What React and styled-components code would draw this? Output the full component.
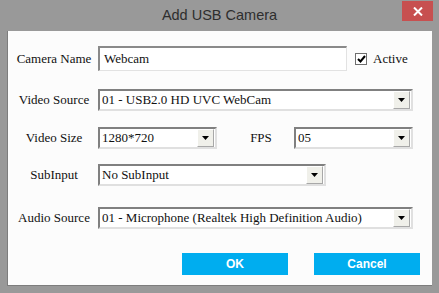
import React from 'react';
import styled, { createGlobalStyle } from 'styled-components';

const GlobalStyle = createGlobalStyle`
  html, body {
    margin: 0;
    padding: 0;
    background: #999999;
  }
`;

const Window = styled.div`
  width: 439px;
  height: 293px;
  background: #999999;
  display: flex;
  flex-direction: column;
  position: relative;
`;

const TitleBar = styled.div`
  height: 31px;
  display: flex;
  align-items: center;
  justify-content: center;
  font-family: "Liberation Sans", Arial, sans-serif;
  font-size: 14.5px;
  color: #2e2e2e;
  padding-bottom: 1px;
  box-sizing: border-box;
`;

const CloseButton = styled.div`
  position: absolute;
  top: 1px;
  right: 6px;
  width: 31px;
  height: 20px;
  background: #c75050;
  display: flex;
  align-items: center;
  justify-content: center;
`;

const Panel = styled.div`
  margin: 0 7px;
  height: 255px;
  background: #fcfcfc;
  border-left: 1px solid #7d7d7d;
  border-bottom: 1px solid #7d7d7d;
  box-sizing: border-box;
  padding: 14px 12px 0 6px;
  display: flex;
  flex-direction: column;
  font-family: "Liberation Serif", "Times New Roman", serif;
  font-size: 13px;
  color: #111;
`;

const Row = styled.div`
  display: flex;
  align-items: center;
  margin-top: ${p => p.$top || 0}px;

  & > * {
    flex-shrink: 0;
  }
`;

const Label = styled.div`
  width: ${p => p.$w || 80}px;
  margin-left: ${p => p.$ml || 0}px;
  margin-right: ${p => p.$mr ?? 4}px;
  text-align: center;
  white-space: nowrap;
`;

const TextBox = styled.div`
  width: ${p => p.$w}px;
  height: 25px;
  box-sizing: border-box;
  border-top: 2px solid #8a8a8a;
  border-left: 2px solid #8a8a8a;
  border-right: 1px solid #e2e2e2;
  border-bottom: 1px solid #e2e2e2;
  background: #fff;
  padding: 0 4px;
  display: flex;
  align-items: center;
`;

const Select = styled.div`
  width: ${p => p.$w}px;
  height: 22px;
  box-sizing: border-box;
  border-top: 2px solid #808080;
  border-left: 2px solid #808080;
  border-right: 2px solid #e0e0e0;
  border-bottom: 2px solid #e0e0e0;
  background: #fff;
  display: flex;
  align-items: center;
  padding-left: 2px;
`;

const SelectText = styled.span`
  flex: 1;
  white-space: nowrap;
  overflow: hidden;
`;

const ArrowButton = styled.div`
  width: 15px;
  height: 16px;
  margin-right: 1px;
  flex-shrink: 0;
  background: #f0f0ea;
  border-top: 1px solid #ffffff;
  border-left: 1px solid #ffffff;
  border-right: 1px solid #a8a8a8;
  border-bottom: 1px solid #a8a8a8;
  display: flex;
  align-items: center;
  justify-content: center;
`;

const CheckWrap = styled.label`
  display: flex;
  align-items: center;
  margin-left: 8px;
  gap: 6px;
`;

const CheckBox = styled.span`
  width: 12px;
  height: 12px;
  box-sizing: border-box;
  border: 1px solid #6e6e6e;
  background: #fff;
  display: flex;
  align-items: center;
  justify-content: center;
`;

const ButtonRow = styled.div`
  display: flex;
  justify-content: flex-end;
  gap: 26px;
  margin-top: 24px;
`;

const Button = styled.div`
  width: 106px;
  height: 22px;
  background: #00adef;
  color: #fff;
  font-family: "Liberation Sans", Arial, sans-serif;
  font-weight: bold;
  font-size: 12px;
  display: flex;
  align-items: center;
  justify-content: center;
`;

const Arrow = () => (
  <ArrowButton>
    <svg width="7" height="4" viewBox="0 0 7 4">
      <polygon points="0,0 7,0 3.5,4" fill="#000" />
    </svg>
  </ArrowButton>
);

const Dropdown = ({ w, children }) => (
  <Select $w={w}>
    <SelectText>{children}</SelectText>
    <Arrow />
  </Select>
);

const App = () => {
  return (
    <Window>
      <GlobalStyle />
      <TitleBar>Add USB Camera</TitleBar>
      <CloseButton>
        <svg width="10" height="9" viewBox="0 0 10 9">
          <path d="M1 0.5 L9 8.5 M9 0.5 L1 8.5" stroke="#fff" strokeWidth="2" />
        </svg>
      </CloseButton>
      <Panel>
        <Row $top={1}>
          <Label>Camera Name</Label>
          <TextBox $w={249}>Webcam</TextBox>
          <CheckWrap>
            <CheckBox>
              <svg width="9" height="8" viewBox="0 0 9 8">
                <path d="M1 4 L3.5 6.5 L8 1" stroke="#000" strokeWidth="2" fill="none" />
              </svg>
            </CheckBox>
            Active
          </CheckWrap>
        </Row>
        <Row $top={18}>
          <Label>Video Source</Label>
          <Dropdown w={315}>01 - USB2.0 HD UVC WebCam</Dropdown>
        </Row>
        <Row $top={16}>
          <Label>Video Size</Label>
          <Dropdown w={119}>1280*720</Dropdown>
          <Label $w={60} $ml={14} $mr={3}>FPS</Label>
          <Dropdown w={119}>05</Dropdown>
        </Row>
        <Row $top={15}>
          <Label>SubInput</Label>
          <Dropdown w={228}>No SubInput</Dropdown>
        </Row>
        <Row $top={21}>
          <Label>Audio Source</Label>
          <Dropdown w={315}>01 - Microphone (Realtek High Definition Audio)</Dropdown>
        </Row>
        <ButtonRow>
          <Button>OK</Button>
          <Button>Cancel</Button>
        </ButtonRow>
      </Panel>
    </Window>
  );
};

export default App;
